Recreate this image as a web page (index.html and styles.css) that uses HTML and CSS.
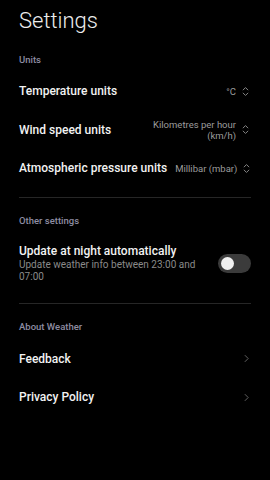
FILE: index.html
```html
<!DOCTYPE html>
<html lang="en">
<head>
  <meta charset="UTF-8">
  <title>Settings</title>
  <link rel="stylesheet" href="styles.css">
</head>
<body>

<div class="page">
  <h1 class="title">Settings</h1>

  <div class="section-title first">Units</div>
  <div class="row">
    <span class="label">Temperature units</span>
    <span class="value">°C</span>
    <svg class="updown" viewBox="0 0 8 12"><path d="M1 4.5 L4 1.5 L7 4.5 M1 7.5 L4 10.5 L7 7.5"/></svg>
  </div>
  <div class="row">
    <span class="label">Wind speed units</span>
    <span class="value">Kilometres per hour<br>(km/h)</span>
    <svg class="updown" viewBox="0 0 8 12"><path d="M1 4.5 L4 1.5 L7 4.5 M1 7.5 L4 10.5 L7 7.5"/></svg>
  </div>
  <div class="row">
    <span class="label">Atmospheric pressure units</span>
    <span class="value">Millibar (mbar)</span>
    <svg class="updown" viewBox="0 0 8 12"><path d="M1 4.5 L4 1.5 L7 4.5 M1 7.5 L4 10.5 L7 7.5"/></svg>
  </div>
  <div class="divider"></div>

  <div class="section-title">Other settings</div>
  <div class="row toggle-row">
    <div class="texts">
      <div class="label">Update at night automatically</div>
      <div class="sub">Update weather info between 23:00 and 07:00</div>
    </div>
    <div class="switch"><div class="knob"></div></div>
  </div>
  <div class="divider"></div>

  <div class="section-title last">About Weather</div>
  <div class="row">
    <span class="label">Feedback</span>
    <svg class="arrow" viewBox="0 0 6 10"><path d="M1 1 L5 5 L1 9"/></svg>
  </div>
  <div class="row">
    <span class="label">Privacy Policy</span>
    <svg class="arrow" viewBox="0 0 6 10"><path d="M1 1 L5 5 L1 9"/></svg>
  </div>
</div>

</body>
</html>
```

FILE: styles.css
```css
html, body {
  margin: 0;
  background-color: #000;
}

body {
  font-family: Roboto, 'Noto Sans', sans-serif;
  color: #f2f2f2;
  width: 270px;
  height: 480px;
  overflow: hidden;
}

.page {
  padding: 1px 19px 0;
}

.title {
  margin: 0;
  height: 40px;
  line-height: 40px;
  font-size: 22px;
  font-weight: 300;
  color: #ededed;
}

.section-title {
  padding: 17px 0 6px;
  line-height: 12px;
  font-size: 9.5px;
  font-weight: 500;
  color: #8e8ca2;
}

.section-title.first {
  padding-top: 13px;
}

.section-title.last {
  padding-bottom: 7px;
}

.row {
  display: flex;
  align-items: center;
  height: 38.5px;
}

.label {
  flex: 1;
  font-size: 12px;
  font-weight: 500;
  line-height: 14px;
  white-space: nowrap;
}

.value {
  flex-shrink: 0;
  white-space: nowrap;
  font-size: 9.5px;
  line-height: 11px;
  color: #9c9c9c;
  text-align: right;
  margin-left: 8px;
}

.updown {
  flex-shrink: 0;
  width: 7px;
  height: 11px;
  margin-left: 6px;
  margin-right: 2px;
  fill: none;
  stroke: #8a8a8a;
  stroke-width: 1.1;
}

.arrow {
  width: 5px;
  height: 9px;
  margin-right: 2px;
  fill: none;
  stroke: #6a6a6a;
  stroke-width: 1.1;
}

.divider {
  height: 1px;
  background-color: #262626;
  margin-top: 9px;
}

.toggle-row {
  height: auto;
  padding: 11px 0 11px;
}

.texts {
  flex: 1;
}

.sub {
  font-size: 10px;
  line-height: 12px;
  color: #8a8a8a;
  margin-top: 1px;
  padding-right: 10px;
}

.switch {
  width: 33px;
  height: 19px;
  border-radius: 10px;
  background-color: #3b3b3b;
  display: flex;
  align-items: center;
  padding-left: 3px;
  box-sizing: border-box;
  margin-left: 10px;
}

.knob {
  width: 13px;
  height: 13px;
  border-radius: 50%;
  background-color: #f0f0f0;
}
```
